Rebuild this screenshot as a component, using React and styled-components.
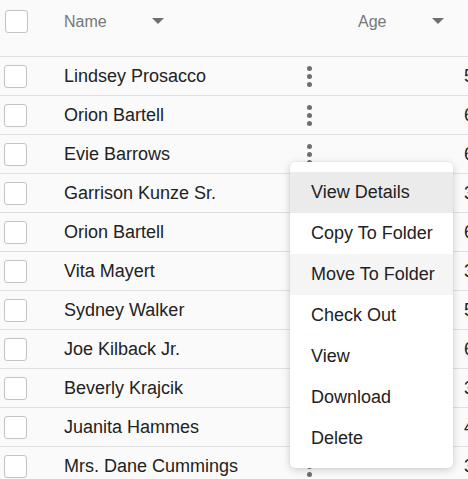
import React from 'react'
import styled, { createGlobalStyle } from 'styled-components'

const GlobalStyle = createGlobalStyle`
  html, body {
    margin: 0;
    padding: 0;
    background: #fafafa;
    overflow: hidden;
  }
  body {
    font-family: 'Liberation Sans', Arial, sans-serif;
  }
`

const people = [
  { name: 'Lindsey Prosacco', age: 52 },
  { name: 'Orion Bartell', age: 61 },
  { name: 'Evie Barrows', age: 67 },
  { name: 'Garrison Kunze Sr.', age: 34 },
  { name: 'Orion Bartell', age: 68 },
  { name: 'Vita Mayert', age: 38 },
  { name: 'Sydney Walker', age: 57 },
  { name: 'Joe Kilback Jr.', age: 63 },
  { name: 'Beverly Krajcik', age: 31 },
  { name: 'Juanita Hammes', age: 45 },
  { name: 'Mrs. Dane Cummings', age: 39 },
]

const actions = [
  { label: 'View Details', tone: 'active' },
  { label: 'Copy To Folder' },
  { label: 'Move To Folder', tone: 'hover' },
  { label: 'Check Out' },
  { label: 'View' },
  { label: 'Download' },
  { label: 'Delete' },
]

const App = () => {
  return (
    <>
      <GlobalStyle />
      <Table>
        <HeaderRow>
          <CheckCell $header>
            <Checkbox />
          </CheckCell>
          <HeaderCell $width={294}>
            <HeaderLabel>Name</HeaderLabel>
            <Caret $gap={45} />
          </HeaderCell>
          <HeaderCell>
            <HeaderLabel>Age</HeaderLabel>
            <Caret $gap={46} />
          </HeaderCell>
        </HeaderRow>
        {people.map((p, i) => (
          <Row key={i}>
            <CheckCell>
              <Checkbox />
            </CheckCell>
            <NameCell>{p.name}</NameCell>
            <DotsCell>
              <Kebab>
                <span />
                <span />
                <span />
              </Kebab>
            </DotsCell>
            <span />
            <AgeCell>{p.age}</AgeCell>
          </Row>
        ))}
        <Menu>
          {actions.map((a) => (
            <MenuItem key={a.label} $tone={a.tone}>
              {a.label}
            </MenuItem>
          ))}
        </Menu>
      </Table>
    </>
  )
}

const Table = styled.div`
  position: relative;
  width: 468px;
  height: 479px;
  overflow: hidden;
  color: #222;
  font-size: 18px;
`

const HeaderRow = styled.div`
  display: flex;
  align-items: flex-start;
  height: 56px;
  border-bottom: 1px solid #e0e0e0;
`

const CheckCell = styled.div`
  width: 64px;
  flex: none;
  height: 100%;
  display: flex;
  align-items: ${(p) => (p.$header ? 'flex-start' : 'center')};
  padding-left: ${(p) => (p.$header ? 5 : 4)}px;
  padding-top: ${(p) => (p.$header ? 10 : 0)}px;
  box-sizing: border-box;
`

const Checkbox = styled.span`
  display: block;
  width: 21px;
  height: 21px;
  border: 1px solid #c4c4c4;
  border-radius: 3px;
  background: #fff;
`

const HeaderCell = styled.div`
  display: flex;
  align-items: center;
  padding-top: 12px;
  width: ${(p) => (p.$width ? `${p.$width}px` : 'auto')};
  flex: none;
`

const HeaderLabel = styled.span`
  color: #777;
  font-size: 16px;
  line-height: 20px;
`

const Caret = styled.span`
  margin-left: ${(p) => p.$gap}px;
  width: 0;
  height: 0;
  border-left: 6px solid transparent;
  border-right: 6px solid transparent;
  border-top: 6px solid #6f6f6f;
  margin-top: -2px;
`

const Row = styled.div`
  display: grid;
  grid-template-columns: 64px 226px 38px 136px auto;
  align-items: center;
  height: 38px;
  border-bottom: 1px solid #e0e0e0;
  white-space: nowrap;
`

const NameCell = styled.span`
  line-height: 22px;
`

const DotsCell = styled.span`
  display: flex;
  justify-content: center;
`

const Kebab = styled.span`
  display: flex;
  flex-direction: column;
  gap: 3px;
  span {
    width: 5px;
    height: 5px;
    border-radius: 50%;
    background: #6f6f6f;
  }
`

const AgeCell = styled.span`
  line-height: 22px;
`

const Menu = styled.div`
  position: absolute;
  left: 290px;
  top: 162px;
  width: 163px;
  padding: 10px 0 9px;
  background: #fff;
  border-radius: 5px;
  box-shadow: 0 2px 8px rgba(0, 0, 0, 0.18), 0 0 2px rgba(0, 0, 0, 0.08);
`

const MenuItem = styled.div`
  height: 41px;
  display: flex;
  align-items: center;
  padding-left: 21px;
  font-size: 18px;
  color: #222;
  background: ${(p) =>
    p.$tone === 'active' ? '#ebebeb' : p.$tone === 'hover' ? '#f5f5f5' : '#fff'};
`

export default App
